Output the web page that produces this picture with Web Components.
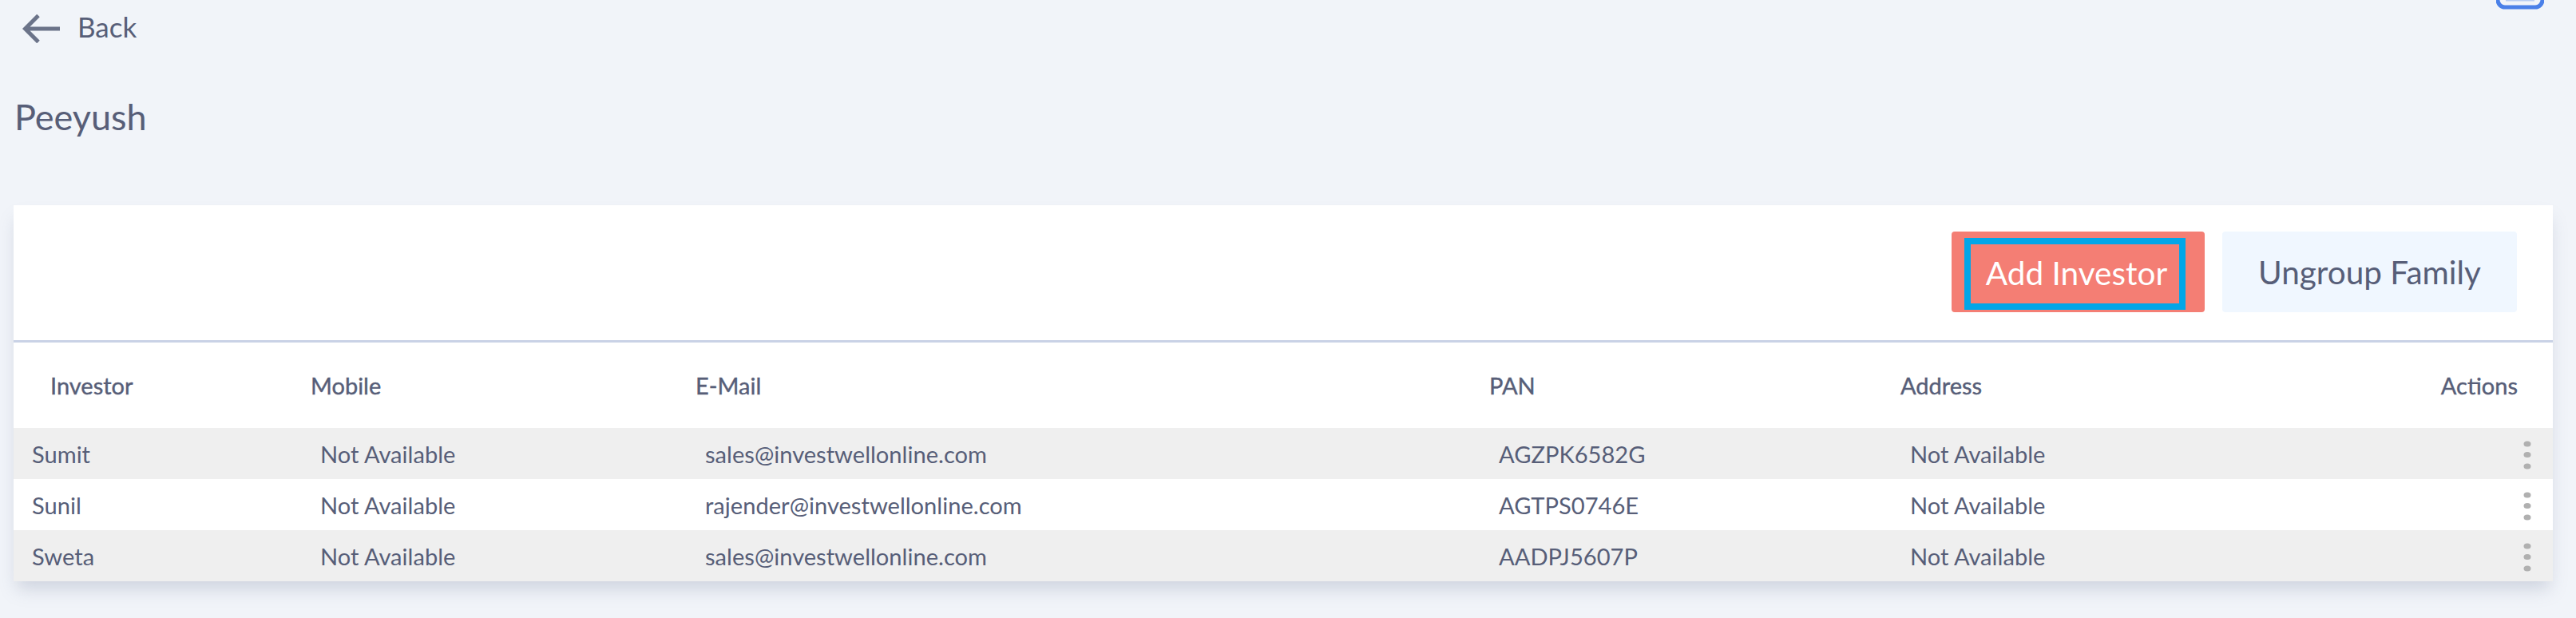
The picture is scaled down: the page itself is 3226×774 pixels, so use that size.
<!DOCTYPE html>
<html>
<head>
<meta charset="utf-8">
<style>
    html, body { margin: 0; padding: 0; background: #f1f4f9; }
    body { font-family: Lato, "Liberation Sans", sans-serif; color: #575e78; height: 774px; overflow: hidden; }
</style>
</head>
<body>
<back-bar>Back</back-bar>
<page-title>Peeyush</page-title>
<family-card>
    <action-button slot="actions" kind="primary">Add Investor</action-button>
    <action-button slot="actions">Ungroup Family</action-button>
    <investor-row head name="Investor" mobile="Mobile" email="E-Mail" pan="PAN" address="Address"></investor-row>
    <investor-row name="Sumit" mobile="Not Available" email="sales@investwellonline.com" pan="AGZPK6582G" address="Not Available"></investor-row>
    <investor-row name="Sunil" mobile="Not Available" email="rajender@investwellonline.com" pan="AGTPS0746E" address="Not Available"></investor-row>
    <investor-row name="Sweta" mobile="Not Available" email="sales@investwellonline.com" pan="AADPJ5607P" address="Not Available"></investor-row>
</family-card>
<script>
class BackBar extends HTMLElement {
    constructor() {
        super();
        this._root = this.attachShadow({ mode: "open" });
    }
    connectedCallback() {
        this._root.innerHTML = `
            <style>
                :host {
                    display: flex;
                    align-items: center;
                    height: 66px;
                    padding-left: 28px;
                    font-size: 35px;
                    color: #575e78;
                }
                .arrow { width: 47px; height: 36px; margin-right: 22px; margin-top: 5px; }
                .cal { margin-left: auto; margin-right: 40px; align-self: flex-start; margin-top: -30px; width: 60px; height: 42px; }
            </style>
            <svg class="arrow" viewBox="0 0 47 36" fill="none" stroke="#6b7389" stroke-width="5">
                <path d="M47 18H4M20 1.500L3.500 18 20 34.500"/>
            </svg>
            <slot></slot>
            <svg class="cal" viewBox="0 0 60 42" fill="none" stroke="#4a80e8" stroke-width="5">
                <rect x="2" y="-10" width="56" height="49" rx="9"/>
                <path d="M12 30h36" stroke-width="3" opacity=".35"/>
            </svg>
        `;
    }
}
customElements.define("back-bar", BackBar);

class PageTitle extends HTMLElement {
    constructor() {
        super();
        this._root = this.attachShadow({ mode: "open" });
        this._root.innerHTML = `
            <style>
                :host {
                    display: block;
                    height: 191px;
                    padding: 50px 0 0 18px;
                    box-sizing: border-box;
                    font-size: 45px;
                    line-height: 60px;
                    color: #575e78;
                }
            </style>
            <slot></slot>
        `;
    }
}
customElements.define("page-title", PageTitle);

class FamilyCard extends HTMLElement {
    constructor() {
        super();
        this._root = this.attachShadow({ mode: "open" });
        this._root.innerHTML = `
            <style>
                :host {
                    display: block;
                    width: 3180px;
                    margin-left: 17px;
                    background: #fff;
                    box-shadow: 0 14px 20px -4px rgba(130, 140, 165, .3);
                }
                .actions {
                    display: flex;
                    justify-content: flex-end;
                    gap: 22px;
                    height: 172px;
                    box-sizing: border-box;
                    padding: 33px 45px 0 0;
                    border-bottom: 3px solid #c9d2e6;
                }
            </style>
            <div class="actions"><slot name="actions"></slot></div>
            <slot></slot>
        `;
    }
}
customElements.define("family-card", FamilyCard);

class ActionButton extends HTMLElement {
    constructor() {
        super();
        this._root = this.attachShadow({ mode: "open" });
        this._root.innerHTML = `
            <style>
                :host {
                    display: flex;
                    align-items: center;
                    justify-content: center;
                    box-sizing: border-box;
                    height: 101px;
                    width: 369px;
                    border-radius: 4px;
                    background: #f0f7ff;
                    color: #575e78;
                    font-size: 40.500px;
                }
                :host([kind="primary"]) {
                    width: 317px;
                    justify-content: flex-start;
                    padding: 8px 0 3px 16px;
                    background: #f47e74;
                    color: #fff;
                }
                :host([kind="primary"]) span {
                    display: flex;
                    align-items: center;
                    justify-content: center;
                    box-sizing: border-box;
                    width: 277px;
                    height: 90px;
                    padding: 0 0 3px 4px;
                    border: 8px solid #02a6e8;
                }
            </style>
            <span><slot></slot></span>
        `;
    }
}
customElements.define("action-button", ActionButton);

class InvestorRow extends HTMLElement {
    constructor() {
        super();
        this._root = this.attachShadow({ mode: "open" });
    }
    connectedCallback() {
        const head = this.hasAttribute("head");
        const cell = (key, cls) => `<div class="${cls || ""}">${this.getAttribute(key)}</div>`;
        const last = head
            ? `<div class="last">Actions</div>`
            : `<div class="last"><svg width="10" height="40" viewBox="0 0 10 40" fill="#b0b0b0">
                   <ellipse cx="5" cy="4" rx="4.500" ry="3.500"/><ellipse cx="5" cy="17.500" rx="4.500" ry="3.500"/><ellipse cx="5" cy="32" rx="4.500" ry="3.500"/>
               </svg></div>`;
        this._root.innerHTML = `
            <style>
                :host {
                    display: grid;
                    grid-template-columns: 372px 482px 994px 515px 1fr auto;
                    align-items: center;
                    height: 64px;
                    font-size: 29.100px;
                    color: #575e78;
                }
                :host(:nth-child(even)) { background: #efefef; }
                :host([head]) {
                    height: 107px;
                    font-size: 29px;
                    -webkit-text-stroke: .4px #575e78;
                }
                div { padding-left: 12px; white-space: nowrap; }
                :host([head]) div { padding-left: 0; }
                .first { padding-left: 23px; }
                :host([head]) .first { padding-left: 46px; }
                .last { padding: 8px 27px 0 0; display: flex; }
                :host([head]) .last { padding: 0 44px 0 0; }
                svg { display: block; }
            </style>
            ${cell("name", "first")}${cell("mobile")}${cell("email")}${cell("pan")}${cell("address")}${last}
        `;
    }
}
customElements.define("investor-row", InvestorRow);
</script>
</body>
</html>
